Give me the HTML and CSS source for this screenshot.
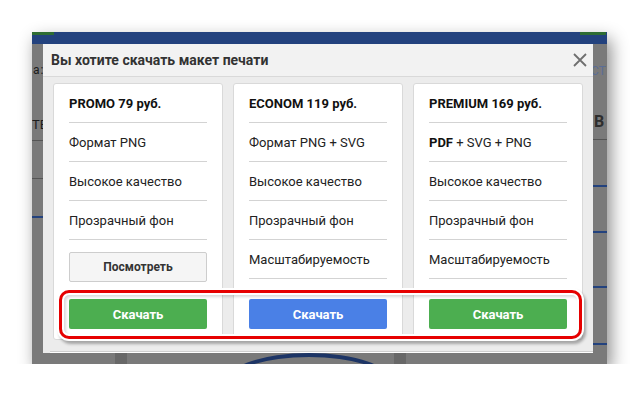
FILE: index.html
```html
<!DOCTYPE html>
<html lang="ru">

<head>
    <meta charset="UTF-8">
    <meta name="viewport" content="width=device-width, initial-scale=1.0">
    <title>Скачать макет печати</title>
    <link rel="stylesheet" href="styles.css">
</head>

<body>

    <div class="shot">
        <div class="screen">
            <!-- dimmed page behind the dialog -->
            <div class="topbar">
                <span class="green green-left"></span>
                <span class="green green-right"></span>
            </div>

            <div class="side side-left">
                <div class="bg-text first">а :</div>
                <div class="bg-text second">TE</div>
                <div class="bg-line gap-8"></div>
                <div class="bg-line gap-37"></div>
                <div class="bg-line blue gap-37"></div>
            </div>

            <div class="modal">
                <div class="modal-header">
                    <span class="modal-title">Вы хотите скачать макет печати</span>
                    <svg class="close" width="14" height="14" viewBox="0 0 14 14">
                        <path d="M1 1 L13 13 M13 1 L1 13" stroke="#6f6f6f" stroke-width="1.8" fill="none" />
                    </svg>
                </div>

                <div class="plans">
                    <div class="plan">
                        <div class="row plan-name">PROMO 79 руб.</div>
                        <div class="row">Формат PNG</div>
                        <div class="row">Высокое качество</div>
                        <div class="row">Прозрачный фон</div>
                        <button class="btn-view">Посмотреть</button>
                        <button class="btn-download green-btn">Скачать</button>
                    </div>

                    <div class="plan">
                        <div class="row plan-name">ECONOM 119 руб.</div>
                        <div class="row">Формат PNG + SVG</div>
                        <div class="row">Высокое качество</div>
                        <div class="row">Прозрачный фон</div>
                        <div class="row">Масштабируемость</div>
                        <button class="btn-download blue-btn">Скачать</button>
                    </div>

                    <div class="plan">
                        <div class="row plan-name">PREMIUM 169 руб.</div>
                        <div class="row"><b>PDF</b>&nbsp;+ SVG + PNG</div>
                        <div class="row">Высокое качество</div>
                        <div class="row">Прозрачный фон</div>
                        <div class="row">Масштабируемость</div>
                        <button class="btn-download green-btn">Скачать</button>
                    </div>
                </div>

                <div class="modal-more"></div>

                <div class="highlight"></div>
            </div>

            <div class="side side-right">
                <div class="bg-text ct">CT I</div>
                <div class="bg-text big">B</div>
                <div class="bg-line gap-10"></div>
                <div class="bg-line blue gap-46"></div>
                <div class="bg-line blue gap-45"></div>
                <div class="bg-line blue gap-54"></div>
                <div class="bg-line blue gap-56"></div>
            </div>

            <div class="bottom">
                <span class="square sq-1"></span>
                <span class="arc"></span>
                <span class="square sq-2"></span>
            </div>
        </div>
    </div>

</body>

</html>
```

FILE: styles.css
```css
body {
    margin: 0;
    padding: 0;
    background-color: #fff;
    font-family: Roboto, "Noto Sans", Arial, sans-serif;
}

.shot {
    padding: 32px 0 0 32px;
}

.screen {
    display: grid;
    grid-template-columns: 11px 550px 14px;
    grid-template-rows: 12px 309px 11px;
    width: 575px;
    height: 332px;
    background-color: #7a7a7a;
    box-shadow: 4px 7px 16px rgba(0, 0, 0, 0.45);
}

/* page behind the dialog */
.topbar {
    grid-column: 1 / -1;
    display: flex;
    justify-content: space-between;
    align-items: flex-start;
    background-color: #23427e;
}

.green {
    height: 3px;
    background-color: #2f6d33;
}

.green-left {
    width: 22px;
}

.green-right {
    width: 26px;
    margin-right: 1px;
}

.side {
    overflow: hidden;
    white-space: nowrap;
}

.bg-text {
    font-size: 12px;
    line-height: 14px;
    color: #1c1c1c;
}

.side-left .first {
    margin-top: 19px;
    margin-left: 1px;
    letter-spacing: -1px;
}

.side-left .second {
    margin-top: 41px;
    font-size: 13px;
}

.bg-line {
    height: 1px;
    background-color: #555;
}

.bg-line.blue {
    height: 2px;
    background-color: #23427e;
}

.gap-8 { margin-top: 8px; }
.gap-10 { margin-top: 10px; }
.gap-37 { margin-top: 37px; }
.gap-45 { margin-top: 44px; }
.gap-46 { margin-top: 45px; }
.gap-54 { margin-top: 53px; }
.gap-56 { margin-top: 55px; }

.side-right .ct {
    margin-top: 20px;
    margin-left: -2px;
    color: #5b6d96;
}

.side-right .big {
    margin-top: 37px;
    margin-left: 1px;
    font-size: 16px;
    font-weight: bold;
    color: #2e2e2e;
}

.bottom {
    grid-column: 1 / -1;
    display: flex;
    overflow: hidden;
}

.square {
    width: 12px;
    height: 11px;
    background-color: #686868;
}

.sq-1 {
    margin-left: 83px;
}

.arc {
    width: 168px;
    height: 60px;
    margin-left: 98px;
    border: 4px solid #1d3566;
    border-radius: 50%;
    box-sizing: border-box;
}

.sq-2 {
    margin-left: 1px;
}

/* dialog */
.modal {
    position: relative;
    display: flex;
    flex-direction: column;
    background-color: #ececec;
    overflow: hidden;
}

.modal-header {
    display: flex;
    justify-content: space-between;
    align-items: center;
    height: 32px;
    padding: 0 6px 0 8px;
    background-color: #f2f2f2;
    border-bottom: 1px solid #d9d9d9;
}

.modal-title {
    font-size: 14px;
    font-weight: bold;
    color: #333;
}

.plans {
    display: flex;
    gap: 10px;
    padding: 6px 10px 0;
}

.plan {
    display: flex;
    flex-direction: column;
    width: 170px;
    height: 257px;
    padding: 0 15px 10px;
    box-sizing: border-box;
    background-color: #fff;
    border: 1px solid #d9d9d9;
    border-radius: 3px;
}

.row {
    display: flex;
    align-items: center;
    height: 38px;
    border-bottom: 1px solid #d3d3d3;
    font-size: 13px;
    color: #222;
    white-space: nowrap;
}

.row b {
    color: #111;
}

.plan-name {
    font-weight: bold;
    color: #111;
}

.btn-view {
    height: 30px;
    margin-top: 12px;
    background-color: #f5f5f5;
    border: 1px solid #cdcdcd;
    border-radius: 2px;
    font-family: inherit;
    font-size: 12px;
    font-weight: bold;
    color: #333;
}

.btn-download {
    height: 30px;
    margin-top: auto;
    border: none;
    border-radius: 2px;
    font-family: inherit;
    font-size: 13px;
    font-weight: bold;
    color: #fff;
}

.green-btn {
    background-color: #4cae50;
}

.blue-btn {
    background-color: #4a80e6;
}

.modal-more {
    height: 1px;
    margin: 11px 0 0 7px;
    background-color: #fff;
    border-top: 1px solid #cfcfcf;
}

/* red marker drawn over the buttons */
.highlight {
    position: absolute;
    left: 16px;
    top: 246px;
    width: 523px;
    height: 49px;
    box-sizing: border-box;
    border: 3px solid #e60000;
    border-radius: 10px;
    box-shadow: 0 0 0 2px #fff, 2px 3px 3px 2px rgba(0, 0, 0, 0.3), inset 0 0 0 2px #fff, inset 2px 2px 3px 2px rgba(0, 0, 0, 0.15);
}
```
